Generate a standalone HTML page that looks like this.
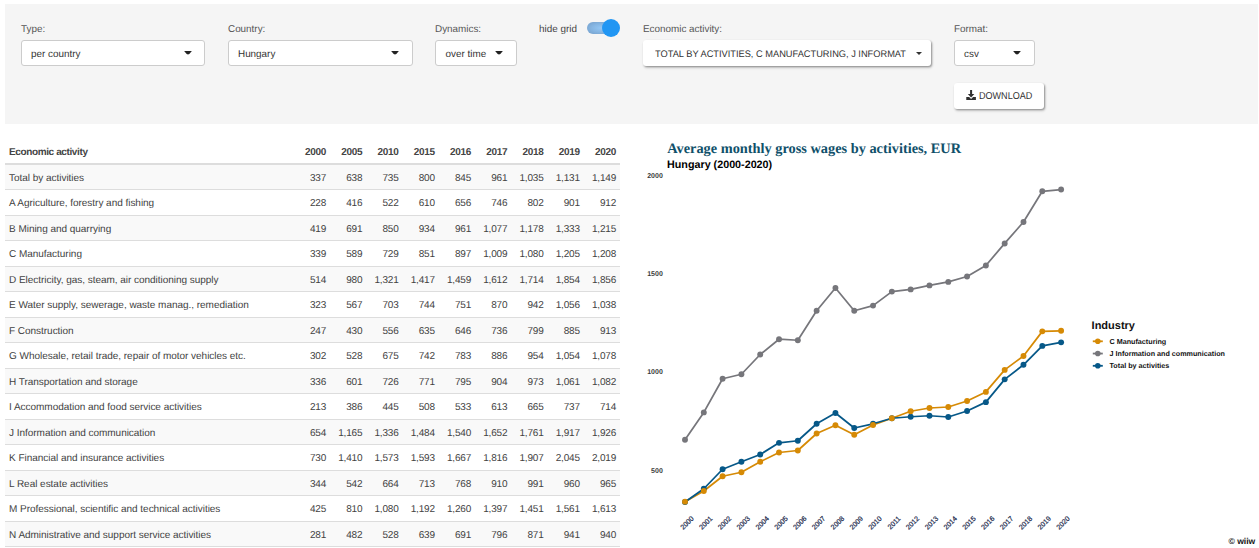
<!DOCTYPE html>
<html lang="en"><head><meta charset="utf-8"><title>wiiw wages</title>
<style>
html,body{margin:0;padding:0;background:#fff;}
body{width:1259px;height:548px;overflow:hidden;position:relative;font-family:"Liberation Sans",Arial,sans-serif;font-size:9.8px;color:#333;text-rendering:geometricPrecision;}
.panel{position:absolute;left:5px;top:4px;width:1253px;height:120px;background:#f5f5f5;}
.lbl{position:absolute;top:23.6px;line-height:12px;font-size:9.9px;color:#555;white-space:nowrap;}
.sel{position:absolute;top:40px;height:23.5px;box-sizing:content-box;background:#fff;border:1px solid #ccc;border-radius:3px;line-height:23.5px;white-space:nowrap;}
.sel span{position:absolute;left:9px;top:1.9px;font-size:9.9px;color:#333;}
.sel .caret{position:absolute;right:12px;top:10px;}
.sel.c2 .caret{right:12.6px}.sel.c3 .caret{right:13px}.sel.c3 span{left:9.6px}.sel.c4 .caret{right:12.5px}
.sel.mat{border:none;height:26px;top:39.5px;line-height:26px;box-shadow:1px 1px 2px rgba(0,0,0,.33),1px 2px 3px rgba(0,0,0,.14);}
.sel.mat span{left:12px;top:2.4px;transform:scaleX(.965);transform-origin:0 50%;font-size:9.6px;}
.sel.mat .caret.sm{right:9px;top:12.5px;}
.tog{position:absolute;left:587px;top:22px;width:30px;height:12px;border-radius:6px;background:radial-gradient(ellipse 16px 7px at 14px 6px,#93c6f4 0%,#86b6e3 55%,#7aa6d2 100%);}
.knob{position:absolute;left:602px;top:19px;width:18px;height:18px;border-radius:50%;background:#2196f3;}
.btn{position:absolute;left:954px;top:83px;width:90px;height:26px;background:#fff;border-radius:3px;box-shadow:1px 1px 2px rgba(0,0,0,.33),1px 2px 3px rgba(0,0,0,.14);}
.btn .dlicon{position:absolute;left:11.7px;top:7px;}
.btn span{position:absolute;left:24.5px;top:0;line-height:27px;font-size:10px;color:#333;transform:scaleX(.905);transform-origin:0 50%;}
.tbl{position:absolute;left:5px;top:138.6px;width:615px;border-collapse:collapse;table-layout:fixed;font-size:10px;color:#424242;letter-spacing:-0.2px;}
.tbl th,.tbl td{padding:0 5px 0 0;text-align:right;width:31.25px;height:21.5px;padding-top:3px;line-height:12px;border-top:1px solid #ddd;white-space:nowrap;overflow:visible;vertical-align:middle;}
.tbl th{border-top:none;border-bottom:2px solid #ddd;height:20.4px;padding-top:4px;font-weight:bold;letter-spacing:-0.3px;color:#444;}
.tbl .c0{text-align:left;padding:3px 0 0 4px;width:285.75px;letter-spacing:-0.03px;}
.tbl th.c0{letter-spacing:-0.38px;padding-top:4px;}
.tbl th:last-child,.tbl td:last-child{padding-right:4px;}
.tbl tbody tr:nth-child(odd){background:#f9f9f9;}
.tbl tbody tr:last-child td{border-bottom:1px solid #ddd;}
.chart{position:absolute;left:630px;top:130px;}
.ct{font-family:"Liberation Serif","Times New Roman",serif;font-weight:bold;font-size:14.35px;fill:#10506a;}
.cs{font-family:"Liberation Sans",Arial,sans-serif;font-weight:bold;font-size:10.75px;fill:#000;}
.yl{font-family:"Liberation Sans",Arial,sans-serif;font-weight:bold;font-size:7px;fill:#3a3a3a;}
.xl{font-family:"Liberation Sans",Arial,sans-serif;font-weight:normal;font-size:7px;fill:#1c2a4c;stroke:#1c2a4c;stroke-width:0.22px;}
.lt{font-family:"Liberation Sans",Arial,sans-serif;font-weight:bold;font-size:11px;fill:#111;}
.le{font-family:"Liberation Sans",Arial,sans-serif;font-weight:bold;font-size:7.2px;fill:#111;}
.cp{font-family:"Liberation Sans",Arial,sans-serif;font-weight:bold;font-size:8.6px;fill:#111;}
</style></head><body>
<div class="panel"></div>
<div class="lbl" style="left:21px">Type:</div>
<div class="sel" style="left:21px;width:181.5px"><span>per country</span><svg class="caret" width="8" height="3.6" viewBox="0 0 8 3.6"><path d="M0.1 0 H7.9 L5.3 2.9 Q4 3.9 2.7 2.9 Z" fill="#222"/></svg></div>
<div class="lbl" style="left:228px">Country:</div>
<div class="sel c2" style="left:228px;width:182.5px"><span>Hungary</span><svg class="caret" width="8" height="3.6" viewBox="0 0 8 3.6"><path d="M0.1 0 H7.9 L5.3 2.9 Q4 3.9 2.7 2.9 Z" fill="#222"/></svg></div>
<div class="lbl" style="left:435px">Dynamics:</div>
<div class="sel c3" style="left:435px;width:79.5px"><span>over time</span><svg class="caret" width="8" height="3.6" viewBox="0 0 8 3.6"><path d="M0.1 0 H7.9 L5.3 2.9 Q4 3.9 2.7 2.9 Z" fill="#222"/></svg></div>
<div class="lbl" style="left:539px;top:24px;color:#444">hide grid</div>
<div class="tog"></div><div class="knob"></div>
<div class="lbl" style="left:643px">Economic activity:</div>
<div class="sel mat" style="left:643px;width:288px"><span>TOTAL BY ACTIVITIES, C MANUFACTURING, J INFORMAT</span><svg class="caret sm" width="6" height="3" viewBox="0 0 6 3"><path d="M0 0 H6 L3 3 Z" fill="#333"/></svg></div>
<div class="lbl" style="left:954px">Format:</div>
<div class="sel c4" style="left:954px;width:78.5px"><span>csv</span><svg class="caret" width="8" height="3.6" viewBox="0 0 8 3.6"><path d="M0.1 0 H7.9 L5.3 2.9 Q4 3.9 2.7 2.9 Z" fill="#222"/></svg></div>
<div class="btn"><svg class="dlicon" width="10.2" height="10" viewBox="0 0 11 10" preserveAspectRatio="none"><path d="M4.4 0 H6.6 V3.9 H9 L5.5 7.4 L2 3.9 H4.4 Z" fill="#2f2f2f"/><path d="M0.3 7.1 H3.4 L5.5 9.1 L7.6 7.1 H10.7 V10 H0.3 Z" fill="#2f2f2f"/></svg><span>DOWNLOAD</span></div>
<table class="tbl"><thead><tr><th class="c0">Economic activity</th><th>2000</th><th>2005</th><th>2010</th><th>2015</th><th>2016</th><th>2017</th><th>2018</th><th>2019</th><th>2020</th></tr></thead>
<tbody>
<tr><td class="c0">Total by activities</td><td>337</td><td>638</td><td>735</td><td>800</td><td>845</td><td>961</td><td>1,035</td><td>1,131</td><td>1,149</td></tr>
<tr><td class="c0">A Agriculture, forestry and fishing</td><td>228</td><td>416</td><td>522</td><td>610</td><td>656</td><td>746</td><td>802</td><td>901</td><td>912</td></tr>
<tr><td class="c0">B Mining and quarrying</td><td>419</td><td>691</td><td>850</td><td>934</td><td>961</td><td>1,077</td><td>1,178</td><td>1,333</td><td>1,215</td></tr>
<tr><td class="c0">C Manufacturing</td><td>339</td><td>589</td><td>729</td><td>851</td><td>897</td><td>1,009</td><td>1,080</td><td>1,205</td><td>1,208</td></tr>
<tr><td class="c0">D Electricity, gas, steam, air conditioning supply</td><td>514</td><td>980</td><td>1,321</td><td>1,417</td><td>1,459</td><td>1,612</td><td>1,714</td><td>1,854</td><td>1,856</td></tr>
<tr><td class="c0">E Water supply, sewerage, waste manag., remediation</td><td>323</td><td>567</td><td>703</td><td>744</td><td>751</td><td>870</td><td>942</td><td>1,056</td><td>1,038</td></tr>
<tr><td class="c0">F Construction</td><td>247</td><td>430</td><td>556</td><td>635</td><td>646</td><td>736</td><td>799</td><td>885</td><td>913</td></tr>
<tr><td class="c0">G Wholesale, retail trade, repair of motor vehicles etc.</td><td>302</td><td>528</td><td>675</td><td>742</td><td>783</td><td>886</td><td>954</td><td>1,054</td><td>1,078</td></tr>
<tr><td class="c0">H Transportation and storage</td><td>336</td><td>601</td><td>726</td><td>771</td><td>795</td><td>904</td><td>973</td><td>1,061</td><td>1,082</td></tr>
<tr><td class="c0">I Accommodation and food service activities</td><td>213</td><td>386</td><td>445</td><td>508</td><td>533</td><td>613</td><td>665</td><td>737</td><td>714</td></tr>
<tr><td class="c0">J Information and communication</td><td>654</td><td>1,165</td><td>1,336</td><td>1,484</td><td>1,540</td><td>1,652</td><td>1,761</td><td>1,917</td><td>1,926</td></tr>
<tr><td class="c0">K Financial and insurance activities</td><td>730</td><td>1,410</td><td>1,573</td><td>1,593</td><td>1,667</td><td>1,816</td><td>1,907</td><td>2,045</td><td>2,019</td></tr>
<tr><td class="c0">L Real estate activities</td><td>344</td><td>542</td><td>664</td><td>713</td><td>768</td><td>910</td><td>991</td><td>960</td><td>965</td></tr>
<tr><td class="c0">M Professional, scientific and technical activities</td><td>425</td><td>810</td><td>1,080</td><td>1,192</td><td>1,260</td><td>1,397</td><td>1,451</td><td>1,561</td><td>1,613</td></tr>
<tr><td class="c0">N Administrative and support service activities</td><td>281</td><td>482</td><td>528</td><td>639</td><td>691</td><td>796</td><td>871</td><td>941</td><td>940</td></tr>
</tbody></table>
<svg class="chart" width="629" height="418" viewBox="0 0 629 418">
<text x="37.2" y="22.7" class="ct">Average monthly gross wages by activities, EUR</text>
<text x="37" y="37.6" class="cs">Hungary (2000-2020)</text>
<text x="32.8" y="48.1" class="yl" text-anchor="end">2000</text>
<text x="32.8" y="146.4" class="yl" text-anchor="end">1500</text>
<text x="32.8" y="244.0" class="yl" text-anchor="end">1000</text>
<text x="32.8" y="343.1" class="yl" text-anchor="end">500</text>
<polyline fill="none" stroke="#d68a05" stroke-width="1.75" stroke-linejoin="round" points="55.00,371.66 73.80,361.00 92.61,346.25 111.41,342.25 130.22,331.75 149.02,322.50 167.83,320.50 186.63,303.50 205.44,295.25 224.25,304.75 243.05,294.96 261.86,288.25 280.66,281.25 299.47,278.00 318.27,277.00 337.08,270.97 355.88,261.92 374.68,239.90 393.49,225.93 412.30,201.35 431.10,200.76"/>
<polyline fill="none" stroke="#76767b" stroke-width="1.75" stroke-linejoin="round" points="55.00,309.71 73.80,282.40 92.61,248.75 111.41,244.25 130.22,224.50 149.02,209.22 167.83,210.25 186.63,180.75 205.44,158.00 224.25,180.75 243.05,175.59 261.86,161.60 280.66,159.40 299.47,155.40 318.27,151.90 337.08,146.48 355.88,135.47 374.68,113.44 393.49,92.00 412.30,61.32 431.10,59.55"/>
<polyline fill="none" stroke="#065888" stroke-width="1.75" stroke-linejoin="round" points="55.00,372.06 73.80,358.75 92.61,339.25 111.41,331.75 130.22,324.50 149.02,312.86 167.83,310.75 186.63,293.75 205.44,283.00 224.25,298.00 243.05,293.78 261.86,288.25 280.66,286.75 299.47,285.75 318.27,287.00 337.08,281.00 355.88,272.15 374.68,249.34 393.49,234.78 412.30,215.90 431.10,212.36"/>
<circle cx="55.00" cy="372.06" r="2.95" fill="#065888"/><circle cx="73.80" cy="358.75" r="2.95" fill="#065888"/><circle cx="92.61" cy="339.25" r="2.95" fill="#065888"/><circle cx="111.41" cy="331.75" r="2.95" fill="#065888"/><circle cx="130.22" cy="324.50" r="2.95" fill="#065888"/><circle cx="149.02" cy="312.86" r="2.95" fill="#065888"/><circle cx="167.83" cy="310.75" r="2.95" fill="#065888"/><circle cx="186.63" cy="293.75" r="2.95" fill="#065888"/><circle cx="205.44" cy="283.00" r="2.95" fill="#065888"/><circle cx="224.25" cy="298.00" r="2.95" fill="#065888"/><circle cx="243.05" cy="293.78" r="2.95" fill="#065888"/><circle cx="261.86" cy="288.25" r="2.95" fill="#065888"/><circle cx="280.66" cy="286.75" r="2.95" fill="#065888"/><circle cx="299.47" cy="285.75" r="2.95" fill="#065888"/><circle cx="318.27" cy="287.00" r="2.95" fill="#065888"/><circle cx="337.08" cy="281.00" r="2.95" fill="#065888"/><circle cx="355.88" cy="272.15" r="2.95" fill="#065888"/><circle cx="374.68" cy="249.34" r="2.95" fill="#065888"/><circle cx="393.49" cy="234.78" r="2.95" fill="#065888"/><circle cx="412.30" cy="215.90" r="2.95" fill="#065888"/><circle cx="431.10" cy="212.36" r="2.95" fill="#065888"/>
<circle cx="55.00" cy="371.66" r="2.95" fill="#d68a05"/><circle cx="73.80" cy="361.00" r="2.95" fill="#d68a05"/><circle cx="92.61" cy="346.25" r="2.95" fill="#d68a05"/><circle cx="111.41" cy="342.25" r="2.95" fill="#d68a05"/><circle cx="130.22" cy="331.75" r="2.95" fill="#d68a05"/><circle cx="149.02" cy="322.50" r="2.95" fill="#d68a05"/><circle cx="167.83" cy="320.50" r="2.95" fill="#d68a05"/><circle cx="186.63" cy="303.50" r="2.95" fill="#d68a05"/><circle cx="205.44" cy="295.25" r="2.95" fill="#d68a05"/><circle cx="224.25" cy="304.75" r="2.95" fill="#d68a05"/><circle cx="243.05" cy="294.96" r="2.95" fill="#d68a05"/><circle cx="261.86" cy="288.25" r="2.95" fill="#d68a05"/><circle cx="280.66" cy="281.25" r="2.95" fill="#d68a05"/><circle cx="299.47" cy="278.00" r="2.95" fill="#d68a05"/><circle cx="318.27" cy="277.00" r="2.95" fill="#d68a05"/><circle cx="337.08" cy="270.97" r="2.95" fill="#d68a05"/><circle cx="355.88" cy="261.92" r="2.95" fill="#d68a05"/><circle cx="374.68" cy="239.90" r="2.95" fill="#d68a05"/><circle cx="393.49" cy="225.93" r="2.95" fill="#d68a05"/><circle cx="412.30" cy="201.35" r="2.95" fill="#d68a05"/><circle cx="431.10" cy="200.76" r="2.95" fill="#d68a05"/>
<circle cx="55.00" cy="309.71" r="2.95" fill="#76767b"/><circle cx="73.80" cy="282.40" r="2.95" fill="#76767b"/><circle cx="92.61" cy="248.75" r="2.95" fill="#76767b"/><circle cx="111.41" cy="244.25" r="2.95" fill="#76767b"/><circle cx="130.22" cy="224.50" r="2.95" fill="#76767b"/><circle cx="149.02" cy="209.22" r="2.95" fill="#76767b"/><circle cx="167.83" cy="210.25" r="2.95" fill="#76767b"/><circle cx="186.63" cy="180.75" r="2.95" fill="#76767b"/><circle cx="205.44" cy="158.00" r="2.95" fill="#76767b"/><circle cx="224.25" cy="180.75" r="2.95" fill="#76767b"/><circle cx="243.05" cy="175.59" r="2.95" fill="#76767b"/><circle cx="261.86" cy="161.60" r="2.95" fill="#76767b"/><circle cx="280.66" cy="159.40" r="2.95" fill="#76767b"/><circle cx="299.47" cy="155.40" r="2.95" fill="#76767b"/><circle cx="318.27" cy="151.90" r="2.95" fill="#76767b"/><circle cx="337.08" cy="146.48" r="2.95" fill="#76767b"/><circle cx="355.88" cy="135.47" r="2.95" fill="#76767b"/><circle cx="374.68" cy="113.44" r="2.95" fill="#76767b"/><circle cx="393.49" cy="92.00" r="2.95" fill="#76767b"/><circle cx="412.30" cy="61.32" r="2.95" fill="#76767b"/><circle cx="431.10" cy="59.55" r="2.95" fill="#76767b"/>
<text class="xl" text-anchor="end" transform="translate(64.20,389.1) rotate(-45)">2000</text><text class="xl" text-anchor="end" transform="translate(83.00,389.1) rotate(-45)">2001</text><text class="xl" text-anchor="end" transform="translate(101.81,389.1) rotate(-45)">2002</text><text class="xl" text-anchor="end" transform="translate(120.61,389.1) rotate(-45)">2003</text><text class="xl" text-anchor="end" transform="translate(139.42,389.1) rotate(-45)">2004</text><text class="xl" text-anchor="end" transform="translate(158.22,389.1) rotate(-45)">2005</text><text class="xl" text-anchor="end" transform="translate(177.03,389.1) rotate(-45)">2006</text><text class="xl" text-anchor="end" transform="translate(195.83,389.1) rotate(-45)">2007</text><text class="xl" text-anchor="end" transform="translate(214.64,389.1) rotate(-45)">2008</text><text class="xl" text-anchor="end" transform="translate(233.44,389.1) rotate(-45)">2009</text><text class="xl" text-anchor="end" transform="translate(252.25,389.1) rotate(-45)">2010</text><text class="xl" text-anchor="end" transform="translate(271.06,389.1) rotate(-45)">2011</text><text class="xl" text-anchor="end" transform="translate(289.86,389.1) rotate(-45)">2012</text><text class="xl" text-anchor="end" transform="translate(308.67,389.1) rotate(-45)">2013</text><text class="xl" text-anchor="end" transform="translate(327.47,389.1) rotate(-45)">2014</text><text class="xl" text-anchor="end" transform="translate(346.28,389.1) rotate(-45)">2015</text><text class="xl" text-anchor="end" transform="translate(365.08,389.1) rotate(-45)">2016</text><text class="xl" text-anchor="end" transform="translate(383.88,389.1) rotate(-45)">2017</text><text class="xl" text-anchor="end" transform="translate(402.69,389.1) rotate(-45)">2018</text><text class="xl" text-anchor="end" transform="translate(421.50,389.1) rotate(-45)">2019</text><text class="xl" text-anchor="end" transform="translate(440.30,389.1) rotate(-45)">2020</text>
<text x="461.6" y="198.7" class="lt">Industry</text>
<line x1="462.8" x2="472.8" y1="211.30" y2="211.30" stroke="#d68a05" stroke-width="1.8"/><circle cx="467.8" cy="211.30" r="2.8" fill="#d68a05"/><text x="479.5" y="213.80" class="le">C Manufacturing</text>
<line x1="462.8" x2="472.8" y1="223.55" y2="223.55" stroke="#76767b" stroke-width="1.8"/><circle cx="467.8" cy="223.55" r="2.8" fill="#76767b"/><text x="479.5" y="226.05" class="le">J Information and communication</text>
<line x1="462.8" x2="472.8" y1="235.80" y2="235.80" stroke="#065888" stroke-width="1.8"/><circle cx="467.8" cy="235.80" r="2.8" fill="#065888"/><text x="479.5" y="238.30" class="le">Total by activities</text>
<text x="625.3" y="414" class="cp" text-anchor="end">© wiiw</text>
</svg>
</body></html>
